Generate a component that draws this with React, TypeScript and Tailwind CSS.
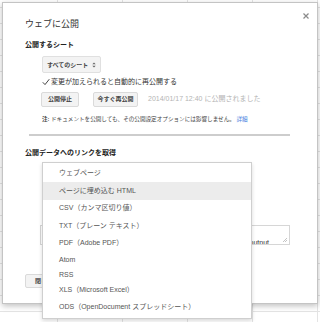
import React from 'react';

const menuItems: { label: string; h: string; active?: boolean }[] = [
    { label: 'ウェブページ', h: 'h-[18px]' },
    { label: 'ページに埋め込む HTML', h: 'h-[18px]', active: true },
    { label: 'CSV（カンマ区切り値）', h: 'h-[17px]' },
    { label: 'TXT（プレーン テキスト）', h: 'h-[18px]' },
    { label: 'PDF（Adobe PDF）', h: 'h-[17px]' },
    { label: 'Atom', h: 'h-[16px]' },
    { label: 'RSS', h: 'h-[15px]' },
    { label: 'XLS（Microsoft Excel）', h: 'h-[15px]' },
    { label: 'ODS（OpenDocument スプレッドシート）', h: 'h-[19px]' },
];

const font = "font-['Liberation_Sans','Noto_Sans_CJK_JP',sans-serif]";

function SheetGrid() {
    // faint spreadsheet behind the dialog
    const rows = Array.from({ length: 21 });
    return (
        <div className="flex flex-col">
            {rows.map((_, i) => (
                <div key={i} className={`flex border-b border-[#e4e4e4] ${i === 0 ? 'h-[8px]' : 'h-[16px]'}`}>
                    <div className="w-[58px] border-r border-[#e4e4e4]" />
                    <div className="w-[65px] border-r border-[#e4e4e4]" />
                    <div className="w-[65px] border-r border-[#e4e4e4]" />
                    <div className="w-[65px] border-r border-[#e4e4e4]" />
                    <div className="w-[65px] border-r border-[#e4e4e4]" />
                </div>
            ))}
        </div>
    );
}

export default function App() {
    return (
        <div className={`relative w-[320px] h-[322px] overflow-hidden bg-white ${font}`}>
            <SheetGrid />

            {/* Dialog */}
            <div className="absolute left-[2px] top-[2px] w-[316px] h-[302px] bg-white border border-[#c4c4c4] shadow-[0_2px_6px_rgba(0,0,0,0.25)]">
                <button className="absolute right-[8px] top-[9px] w-[7px] h-[7px] flex items-center justify-center">
                    <svg width="6" height="6" viewBox="0 0 6 6">
                        <path d="M0.5 0.5 L5.5 5.5 M5.5 0.5 L0.5 5.5" stroke="#8a8a8a" strokeWidth="1.2" />
                    </svg>
                </button>

                <div className="pl-[22px] pt-[15px] flex flex-col">
                    <h1 className="text-[9px] leading-[12px] text-[#333]">ウェブに公開</h1>

                    <h2 className="mt-[10px] text-[7px] leading-[10px] font-bold text-[#222]">公開するシート</h2>

                    <div className="ml-[17px] mt-[6px] self-start flex items-center gap-[4px] h-[17px] px-[4px] bg-[#f3f3f3] border border-[#e0e0e0] rounded-[2px] whitespace-nowrap">
                        <span className="text-[6px] leading-none font-bold text-[#444]">すべてのシート</span>
                        <svg width="4" height="6" viewBox="0 0 4 6">
                            <path d="M0.3 2.3 L2 0.5 L3.7 2.3 Z M0.3 3.7 L2 5.5 L3.7 3.7 Z" fill="#666" />
                        </svg>
                    </div>

                    <div className="ml-[17px] mt-[4px] flex items-center gap-[1px] h-[10px]">
                        <svg width="8" height="8" viewBox="0 0 8 8">
                            <path d="M0.8 4.3 L3 6.6 L7.3 1.2" stroke="#444" strokeWidth="1" fill="none" />
                        </svg>
                        <span className="text-[7px] leading-[10px] text-[#333]">変更が加えられると自動的に再公開する</span>
                    </div>

                    <div className="ml-[16px] mt-[5px] flex items-center h-[15px]">
                        <div className="w-[38px] h-[15px] flex items-center justify-center bg-[#f3f3f3] border border-[#dadada] rounded-[2px]">
                            <span className="text-[6px] font-bold text-[#444]">公開停止</span>
                        </div>
                        <div className="ml-[14px] w-[45px] h-[15px] flex items-center justify-center bg-[#f3f3f3] border border-[#dadada] rounded-[2px]">
                            <span className="text-[6px] font-bold text-[#444]">今すぐ再公開</span>
                        </div>
                        <span className="ml-[10px] text-[7px] text-[#b4b4b4] whitespace-nowrap">2014/01/17 12:40 に公開されました</span>
                    </div>

                    <p className="ml-[17px] mt-[8px] text-[5.6px] leading-[8px] text-[#444] whitespace-nowrap">
                        <span className="font-bold">注:</span> ドキュメントを公開しても、その公開設定オプションには影響しません。 <span className="text-[#4a7fe0]">詳細</span>
                    </p>

                    <div className="ml-[4px] mt-[11px] w-[261px] h-[2px] bg-[#cdcdcd]" />

                    <h2 className="mt-[12px] text-[7px] leading-[10px] font-bold text-[#222]">公開データへのリンクを取得</h2>

                    {/* content mostly hidden under the menu */}
                    <div className="ml-[15px] mt-[67px] w-[250px] h-[20px] border border-[#d6d6d6] flex items-end justify-end overflow-hidden">
                        <span className="text-[7px] leading-[8px] text-[#333] mr-[12px] translate-y-[3px]">output</span>
                        <svg width="7" height="7" viewBox="0 0 7 7" className="mb-[1px] mr-[1px]">
                            <path d="M6 2 L2 6 M6 4 L4 6" stroke="#aaa" strokeWidth="0.7" />
                        </svg>
                    </div>

                    <div className="mt-[29px] w-[30px] h-[14px] flex items-center pl-[9px] bg-[#f3f3f3] border border-[#dadada] rounded-[2px]">
                        <span className="text-[6px] font-bold text-[#444]">閉じる</span>
                    </div>
                </div>
            </div>

            {/* Export format menu */}
            <div className="absolute left-[42px] top-[162px] w-[210px] bg-white border border-[#cfcfcf] shadow-[0_2px_4px_rgba(0,0,0,0.15)] pt-[1px] pb-[1px]">
                {menuItems.map((item) => (
                    <div
                        key={item.label}
                        className={`${item.h} flex items-center pl-[16px] text-[7px] text-[#555] whitespace-nowrap ${item.active ? 'bg-[#ececec]' : ''}`}
                    >
                        {item.label}
                    </div>
                ))}
            </div>
        </div>
    );
}
